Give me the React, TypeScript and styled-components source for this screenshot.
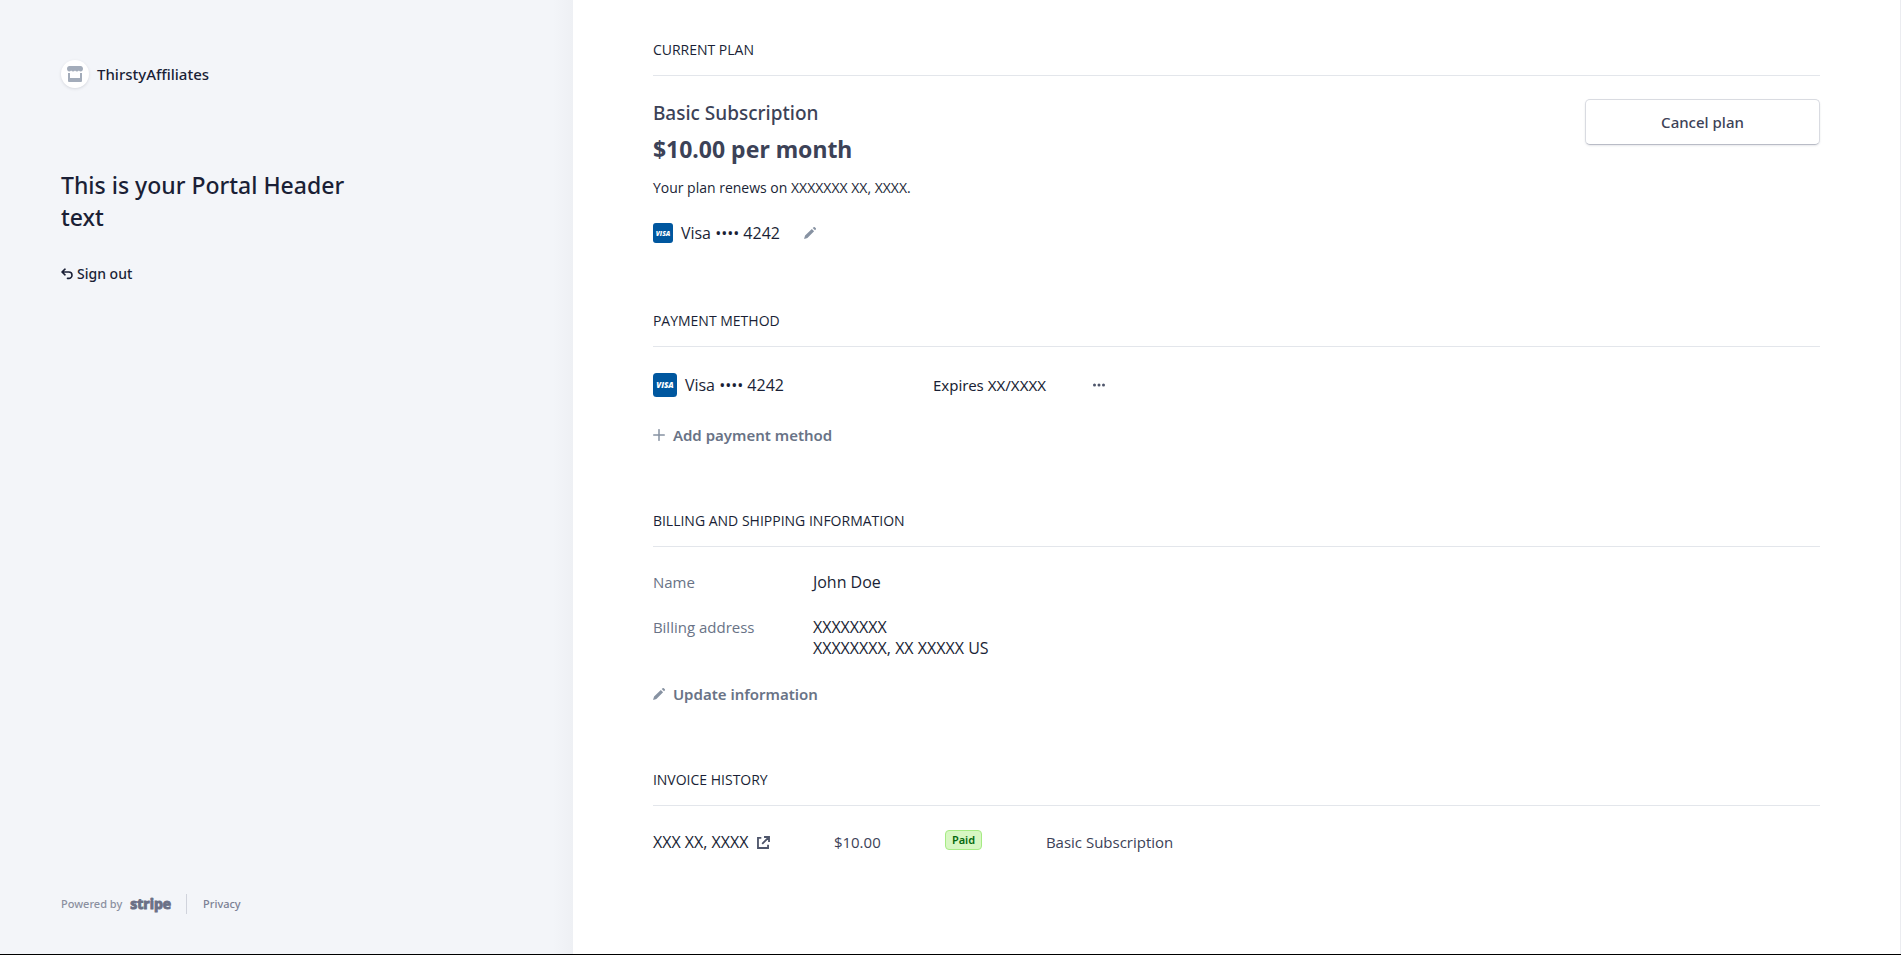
import React from "react";
import styled, { createGlobalStyle } from "styled-components";

const GlobalStyle = createGlobalStyle`
  *, *::before, *::after { box-sizing: border-box; }
  body {
    margin: 0;
    font-family: "Open Sans", "Noto Sans", sans-serif;
    font-size: 16px;
    line-height: 24px;
    color: #1a1f36;
    background: #fff;
  }
  h1, h2, p, dl, dd { margin: 0; }
`;

const medium = `font-family: "Noto Sans", "Open Sans", sans-serif; font-weight: 500;`;

const Page = styled.div`
  display: grid;
  grid-template-columns: 22fr 51fr;
  min-height: 100vh;
  border-bottom: 1px solid #000;
`;

const Sidebar = styled.aside`
  display: flex;
  flex-direction: column;
  padding: 60px 60px 40px 61px;
  background: linear-gradient(to left, #eef0f4, #f3f5f9 20px);
`;

const Brand = styled.div`
  ${medium}
  display: flex;
  align-items: center;
  gap: 8px;
  font-size: 15px;
  line-height: 28px;
`;

const BrandMark = styled.span`
  display: flex;
  align-items: center;
  justify-content: center;
  width: 28px;
  height: 28px;
  border-radius: 50%;
  background: #fff;
  box-shadow: 0 1px 3px rgba(60, 66, 87, 0.16);
`;

const Headline = styled.h1`
  ${medium}
  max-width: 300px;
  margin-top: 81px;
  font-size: 23px;
  line-height: 32px;
`;

const SignOut = styled.a`
  ${medium}
  display: flex;
  align-items: center;
  gap: 4px;
  margin-top: 31px;
  font-size: 14px;
  line-height: 20px;
  color: inherit;
  text-decoration: none;
`;

const Footer = styled.footer`
  ${medium}
  display: flex;
  align-items: center;
  margin-top: auto;
  font-size: 11px;
  line-height: 20px;
  color: #8b90a0;
`;

const StripeName = styled.span`
  margin-left: 8px;
  font-family: "Open Sans", sans-serif;
  font-size: 14px;
  font-weight: 700;
  -webkit-text-stroke: 1px #6b7086;
  color: #6b7086;
`;

const PrivacyLink = styled.a`
  margin-left: 15px;
  padding-left: 16px;
  border-left: 1px solid #d0d3dc;
  color: #7b8094;
  text-decoration: none;
`;

const Main = styled.main`
  display: flex;
  flex-direction: column;
  gap: 64px;
  padding: 40px 80px;
  border-right: 1px solid #ebecf0;
`;

const SectionTitle = styled.h2`
  margin-bottom: 23px;
  padding-bottom: 15px;
  border-bottom: 1px solid #e3e6eb;
  font-size: 14px;
  font-weight: 500;
  line-height: 20px;
  text-transform: uppercase;
`;

const PlanRow = styled.div`
  display: flex;
  align-items: flex-start;
  justify-content: space-between;
  padding-bottom: 4px;
`;

const PlanName = styled.p`
  ${medium}
  font-size: 19px;
  line-height: 28px;
  color: #3c4257;
`;

const PlanPrice = styled.p`
  margin-top: 4px;
  font-family: "Noto Sans", sans-serif;
  font-size: 23px;
  font-weight: 700;
  line-height: 36px;
  color: #3c4257;
`;

const Renewal = styled.p`
  margin: 11px 0 25px;
  font-size: 14px;
  line-height: 20px;
`;

const CardLine = styled.div`
  display: flex;
  align-items: center;
  gap: 8px;
  line-height: 20px;
`;

const BareButton = styled.button`
  display: inline-flex;
  align-items: center;
  padding: 0;
  border: 0;
  background: none;
  color: #8792a2;
  cursor: pointer;
`;

const EditButton = styled(BareButton)`
  margin-left: 16px;
`;

const TextButton = styled(BareButton)`
  display: flex;
  gap: 8px;
  font-family: "Noto Sans", sans-serif;
  font-size: 15px;
  font-weight: 600;
  line-height: 24px;

  span { color: #697386; }
`;

const CancelButton = styled.button`
  ${medium}
  width: 235px;
  height: 46px;
  border: 1px solid #d9dbe1;
  border-bottom-color: #b9bcc6;
  border-radius: 5px;
  background: #fff;
  box-shadow: 0 1px 2px rgba(60, 66, 87, 0.12);
  font-size: 15px;
  color: #3c4257;
`;

const MethodRow = styled.div`
  display: grid;
  grid-template-columns: 280px 159px auto;
  align-items: center;
  justify-content: start;
  margin: 26px 0 26px;
`;

const Expiry = styled.span`
  font-family: "Noto Sans", "Open Sans", sans-serif;
  font-size: 15px;
`;

const Details = styled.dl`
  display: grid;
  grid-template-columns: 160px 1fr;
  row-gap: 24px;
  margin: 25px 0 23px;
  line-height: 21px;

  dt { font-size: 15px; color: #697386; }
`;

const Invoices = styled.table`
  border-collapse: collapse;
  margin-top: 24px;
  line-height: 24px;

  td { padding: 0; }
`;

const Cell = styled.td<{ $width?: number }>`
  width: ${({ $width }) => ($width ? `${$width}px` : "auto")};
  font-size: 15px;
  color: #3c4257;
`;

const InvoiceLink = styled.a`
  display: flex;
  align-items: center;
  gap: 8px;
  font-size: 16px;
  color: #1a1f36;
  text-decoration: none;
`;

const Badge = styled.span`
  display: block;
  width: fit-content;
  margin-bottom: 4px;
  padding: 0 6px;
  border: 1px solid #a6eb84;
  border-radius: 4px;
  background: #d7f7c2;
  font-family: "Noto Sans", sans-serif;
  font-size: 11px;
  font-weight: 600;
  line-height: 18px;
  color: #05690d;
`;

const ShopIcon = () => (
  <svg width="16" height="16" viewBox="0 0 16 16" fill="#a3acba" aria-hidden="true">
    <path d="M2.500 0h11C15 0 16 1.200 16 2.800 16 4.400 15 5.500 13.800 5.500a2.300 2.300 0 0 1-1.900-.9 2.400 2.400 0 0 1-3.900 0 2.400 2.400 0 0 1-3.900 0 2.300 2.300 0 0 1-1.900.9C1 5.500 0 4.400 0 2.800 0 1.200 1 0 2.500 0zM1 7h2v5h10V7h2v8a1 1 0 0 1-1 1H2a1 1 0 0 1-1-1z" />
  </svg>
);

const BackIcon = () => (
  <svg width="12" height="12" viewBox="0 0 12 12" fill="none" stroke="currentColor" strokeWidth="1.600" strokeLinecap="round" strokeLinejoin="round" aria-hidden="true">
    <path d="M4 1.200 1 4l3 2.800M1.200 4h6.600a3.200 3.200 0 0 1 0 6.400H6.500" />
  </svg>
);

const PencilIcon = () => (
  <svg width="12" height="12" viewBox="0 0 12 12" fill="currentColor" aria-hidden="true">
    <path d="M7.800 1.900l2.300 2.300-6.700 6.700L0 12l1.100-3.400zM8.700 1l.6-.6a1.300 1.300 0 0 1 1.800 0l.5.500a1.300 1.300 0 0 1 0 1.800l-.6.6z" />
  </svg>
);

const PlusIcon = () => (
  <svg width="12" height="12" viewBox="0 0 12 12" stroke="currentColor" strokeWidth="1.500" strokeLinecap="round" aria-hidden="true">
    <path d="M6 .7v10.600M.7 6h10.600" />
  </svg>
);

const DotsIcon = () => (
  <svg width="14" height="4" viewBox="0 0 14 4" fill="#4f566b" aria-hidden="true">
    <circle cx="2.500" cy="2" r="1.500" />
    <circle cx="7" cy="2" r="1.500" />
    <circle cx="11.500" cy="2" r="1.500" />
  </svg>
);

const ExternalIcon = () => (
  <svg width="13" height="13" viewBox="0 0 12 12" fill="none" stroke="#4f566b" strokeWidth="1.700" aria-hidden="true">
    <path d="M4 1.800H.9v9.300h9.300V8M6.500.9h4.600v4.600M11 1 4.800 7.200" />
  </svg>
);

const VisaIcon = ({ size }: { size: number }) => (
  <svg width={size} height={size} viewBox="0 0 24 24" role="img" aria-label="Visa">
    <rect width="24" height="24" rx="3.500" fill="#00579f" />
    <text x="12" y="15" textAnchor="middle" fill="#fff" fontFamily="Open Sans, sans-serif" fontSize="8" fontWeight="800" fontStyle="italic">VISA</text>
  </svg>
);

export default function App() {
  return (
    <>
      <GlobalStyle />
      <Page>
        <Sidebar>
          <Brand>
            <BrandMark><ShopIcon /></BrandMark>
            ThirstyAffiliates
          </Brand>
          <Headline>This is your Portal Header text</Headline>
          <SignOut href="#sign-out"><BackIcon />Sign out</SignOut>
          <Footer>
            Powered by
            <StripeName>stripe</StripeName>
            <PrivacyLink href="#privacy">Privacy</PrivacyLink>
          </Footer>
        </Sidebar>
        <Main>
          <section>
            <SectionTitle>Current plan</SectionTitle>
            <PlanRow>
              <div>
                <PlanName>Basic Subscription</PlanName>
                <PlanPrice>$10.00 per month</PlanPrice>
                <Renewal>Your plan renews on XXXXXXX XX, XXXX.</Renewal>
                <CardLine>
                  <VisaIcon size={20} />
                  <span>Visa •••• 4242</span>
                  <EditButton aria-label="Edit payment method"><PencilIcon /></EditButton>
                </CardLine>
              </div>
              <CancelButton>Cancel plan</CancelButton>
            </PlanRow>
          </section>
          <section>
            <SectionTitle>Payment method</SectionTitle>
            <MethodRow>
              <CardLine>
                <VisaIcon size={24} />
                <span>Visa •••• 4242</span>
              </CardLine>
              <Expiry>Expires XX/XXXX</Expiry>
              <BareButton aria-label="More options"><DotsIcon /></BareButton>
            </MethodRow>
            <TextButton><PlusIcon /><span>Add payment method</span></TextButton>
          </section>
          <section>
            <SectionTitle>Billing and shipping information</SectionTitle>
            <Details>
              <dt>Name</dt>
              <dd>John Doe</dd>
              <dt>Billing address</dt>
              <dd>XXXXXXXX<br />XXXXXXXX, XX XXXXX US</dd>
            </Details>
            <TextButton><PencilIcon /><span>Update information</span></TextButton>
          </section>
          <section>
            <SectionTitle>Invoice history</SectionTitle>
            <Invoices>
              <tbody>
                <tr>
                  <Cell $width={181}><InvoiceLink href="#invoice">XXX XX, XXXX<ExternalIcon /></InvoiceLink></Cell>
                  <Cell $width={111}>$10.00</Cell>
                  <Cell $width={101}><Badge>Paid</Badge></Cell>
                  <Cell>Basic Subscription</Cell>
                </tr>
              </tbody>
            </Invoices>
          </section>
        </Main>
      </Page>
    </>
  );
}
